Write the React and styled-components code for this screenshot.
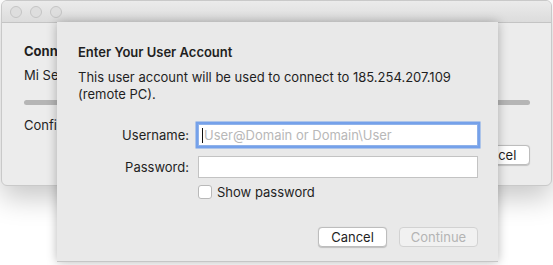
import React from 'react';
import styled, { createGlobalStyle } from 'styled-components';

const GlobalStyle = createGlobalStyle`
  html, body {
    margin: 0;
    padding: 0;
    background: #ffffff;
  }
  body {
    font-family: Inter, "Liberation Sans", Arial, sans-serif;
    font-size: 13px;
    color: #1f1f1f;
  }
`;

const Desktop = styled.div`
  position: relative;
  width: 553px;
  height: 265px;
  overflow: hidden;
  background: #ffffff;
`;

const Window = styled.div`
  position: absolute;
  left: 1px;
  top: 0;
  width: 549px;
  height: 184px;
  border: 1px solid #c9c9c9;
  border-radius: 6px;
  background: #ececec;
  box-shadow: 0 12px 28px rgba(0, 0, 0, 0.22);
  overflow: hidden;
  display: flex;
  flex-direction: column;
`;

const TitleBar = styled.div`
  height: 21px;
  flex: none;
  display: flex;
  align-items: center;
  gap: 8px;
  padding-left: 8px;
  background: linear-gradient(#ebebeb, #dcdcdc);
  border-bottom: 1px solid #c4c4c4;
`;

const Light = styled.span`
  width: 10px;
  height: 10px;
  border-radius: 50%;
  background: #dedede;
  border: 1px solid #c4c4c4;
`;

const WindowBody = styled.div`
  flex: 1;
  padding: 20px 21px 0 22px;
  display: flex;
  flex-direction: column;
  white-space: nowrap;
`;

const Heading = styled.div`
  font-weight: bold;
  line-height: 16px;
`;

const Line = styled.div`
  margin-top: ${p => p.$gap || 0}px;
  line-height: 16px;
`;

const Progress = styled.div`
  margin-top: 17px;
  height: 5px;
  border-radius: 3px;
  background: #b5b5b5;
`;

const BackActions = styled.div`
  display: flex;
  justify-content: flex-end;
  margin-top: 12px;
`;

const Button = styled.button`
  font: inherit;
  font-size: 13px;
  height: 20px;
  padding: 0;
  width: ${p => p.$w}px;
  border-radius: 4px;
  border: 1px solid ${p => (p.disabled ? '#d2d2d2' : '#bdbdbd')};
  background: ${p => (p.disabled ? '#f1f1f1' : '#ffffff')};
  color: ${p => (p.disabled ? '#b4b4b4' : '#1f1f1f')};
  box-shadow: ${p => (p.disabled ? 'none' : '0 0.5px 1px rgba(0,0,0,0.18)')};
  line-height: 18px;
`;

const Sheet = styled.div`
  position: absolute;
  left: 57px;
  top: 22px;
  width: 441px;
  height: 240px;
  box-sizing: border-box;
  background: #e9e9e9;
  border-bottom: 1px solid #c6c6c6;
  box-shadow: 0 0 10px rgba(0, 0, 0, 0.28);
  padding: 22px 20px 0 21px;
  display: flex;
  flex-direction: column;
`;

const SheetTitle = styled.div`
  font-weight: 600;
  line-height: 16px;
`;

const Message = styled.p`
  margin: 9px 0 0;
  line-height: 17px;
  width: 390px;
`;

const Form = styled.div`
  margin-top: 19px;
  display: grid;
  grid-template-columns: 111px 280px;
  column-gap: 9px;
  row-gap: 8px;
  align-items: center;
`;

const Label = styled.label`
  text-align: right;
  line-height: 16px;
`;

const Field = styled.div`
  height: 22px;
  box-sizing: border-box;
  background: #ffffff;
  border: 1px solid ${p => (p.$focused ? '#8fb2ea' : '#c3c3c3')};
  box-shadow: ${p => (p.$focused ? '0 0 0 2.5px #75a1ea' : 'none')};
  margin: ${p => (p.$focused ? '2px 0' : '0')};
  display: flex;
  align-items: center;
  padding-left: 3px;
  color: #b8b8b8;
  line-height: 16px;
`;

const Caret = styled.span`
  width: 1px;
  height: 15px;
  background: #111;
  margin-right: 1px;
`;

const CheckRow = styled.div`
  grid-column: 2;
  display: flex;
  align-items: center;
  gap: 5px;
  margin-top: -2px;
`;

const Box = styled.span`
  width: 12px;
  height: 12px;
  border: 1px solid #b9b9b9;
  border-radius: 3px;
  background: #ffffff;
`;

const Actions = styled.div`
  margin-top: 27px;
  display: flex;
  justify-content: flex-end;
  gap: 12px;
`;

export default function App() {
  return (
    <>
      <GlobalStyle />
      <Desktop>
        <Window>
          <TitleBar>
            <Light />
            <Light />
            <Light />
          </TitleBar>
          <WindowBody>
            <Heading>Connecting to 185.254.207.109</Heading>
            <Line $gap={8}>Mi Servidor</Line>
            <Progress />
            <Line $gap={12}>Configuring remote PC...</Line>
            <BackActions>
              <Button $w={70}>Cancel</Button>
            </BackActions>
          </WindowBody>
        </Window>

        <Sheet>
          <SheetTitle>Enter Your User Account</SheetTitle>
          <Message>
            This user account will be used to connect to 185.254.207.109 (remote PC).
          </Message>
          <Form>
            <Label>Username:</Label>
            <Field $focused>
              <Caret />
              User@Domain or Domain\User
            </Field>
            <Label>Password:</Label>
            <Field />
            <CheckRow>
              <Box />
              <span>Show password</span>
            </CheckRow>
          </Form>
          <Actions>
            <Button $w={69}>Cancel</Button>
            <Button $w={79} disabled>Continue</Button>
          </Actions>
        </Sheet>
      </Desktop>
    </>
  );
}
